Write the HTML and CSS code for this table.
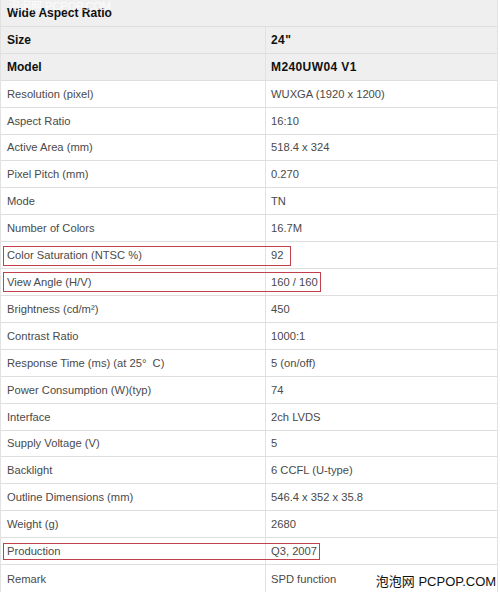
FILE: index.html
```html
<!DOCTYPE html>
<html>
<head>
<meta charset="utf-8">
<link rel="stylesheet" href="styles.css">
</head>
<body>
<div class="spec">
  <div class="row head full"><div class="k">Wide Aspect Ratio</div><span class="wm">泡泡网 PCPOP.COM</span></div>
  <div class="row head"><div class="k">Size</div><div class="v">24"</div></div>
  <div class="row head"><div class="k">Model</div><div class="v">M240UW04 V1</div></div>
  <div class="row"><div class="k">Resolution (pixel)</div><div class="v">WUXGA (1920 x 1200)</div></div>
  <div class="row"><div class="k">Aspect Ratio</div><div class="v">16:10</div></div>
  <div class="row"><div class="k">Active Area (mm)</div><div class="v">518.4 x 324</div></div>
  <div class="row"><div class="k">Pixel Pitch (mm)</div><div class="v">0.270</div></div>
  <div class="row"><div class="k">Mode</div><div class="v">TN</div></div>
  <div class="row"><div class="k">Number of Colors</div><div class="v">16.7M</div></div>
  <div class="row"><div class="k">Color Saturation (NTSC %)</div><div class="v">92</div><span class="mark m-sat"></span></div>
  <div class="row"><div class="k">View Angle (H/V)</div><div class="v">160 / 160</div><span class="mark m-view"></span></div>
  <div class="row"><div class="k">Brightness (cd/m²)</div><div class="v">450</div></div>
  <div class="row"><div class="k">Contrast Ratio</div><div class="v">1000:1</div></div>
  <div class="row"><div class="k">Response Time (ms) (at 25°&nbsp;&nbsp;C)</div><div class="v">5 (on/off)</div></div>
  <div class="row"><div class="k">Power Consumption (W)(typ)</div><div class="v">74</div></div>
  <div class="row"><div class="k">Interface</div><div class="v">2ch LVDS</div></div>
  <div class="row"><div class="k">Supply Voltage (V)</div><div class="v">5</div></div>
  <div class="row"><div class="k">Backlight</div><div class="v">6 CCFL (U-type)</div></div>
  <div class="row"><div class="k">Outline Dimensions (mm)</div><div class="v">546.4 x 352 x 35.8</div></div>
  <div class="row"><div class="k">Weight (g)</div><div class="v">2680</div></div>
  <div class="row"><div class="k">Production</div><div class="v">Q3, 2007</div><span class="mark m-prod"></span></div>
  <div class="row last"><div class="k">Remark</div><div class="v">SPD function</div><span class="logo">泡泡网 PCPOP.COM</span></div>
</div>
</body>
</html>
```
FILE: styles.css
```css
html, body {
  margin: 0;
  padding: 0;
  background: #ffffff;
}
.spec {
  width: 498px;
  height: 592px;
  display: grid;
  grid-template-rows: repeat(22, 1fr);
  border-left: 1px solid #e2e2e2;
  border-right: 1px solid #e2e2e2;
  box-sizing: border-box;
  font-family: "Liberation Sans", Arial, sans-serif;
  font-size: 11.2px;
  color: #4a4a4a;
}
.row {
  position: relative;
  display: grid;
  grid-template-columns: 264px 1fr;
  align-items: center;
  border-bottom: 1px solid #dedede;
  background: #fff;
}
.row.last {
  border-bottom: none;
}
.row.full {
  grid-template-columns: 1fr;
}
.row.head {
  background: #efefef;
  color: #111;
  font-weight: bold;
  font-size: 12px;
}
.k {
  padding-left: 6px;
  white-space: nowrap;
}
.v {
  height: 100%;
  display: flex;
  align-items: center;
  padding-left: 5px;
  border-left: 1px solid #e2e2e2;
  white-space: nowrap;
}
.head .v {
  letter-spacing: 0.4px;
}
.mark {
  position: absolute;
  left: 2px;
  border: 1px solid #c0404c;
  box-sizing: border-box;
}
.m-sat {
  top: 4px;
  width: 288px;
  height: 20px;
}
.m-view {
  top: 3px;
  width: 318px;
  height: 20px;
}
.m-prod {
  top: 5px;
  width: 317px;
  height: 17px;
}
.wm {
  position: absolute;
  left: 8px;
  top: 0;
  font-family: "Liberation Sans", "Noto Sans CJK SC", sans-serif;
  font-size: 11px;
  line-height: 12px;
  font-weight: normal;
  color: rgba(255, 255, 255, 0.85);
  white-space: nowrap;
}
.logo {
  position: absolute;
  right: 2px;
  bottom: 0;
  height: 22px;
  width: 118px;
  display: flex;
  align-items: center;
  justify-content: center;
  background: #fff;
  font-family: "Liberation Sans", "Noto Sans CJK SC", sans-serif;
  font-size: 13px;
  color: #111;
  white-space: nowrap;
}
```
